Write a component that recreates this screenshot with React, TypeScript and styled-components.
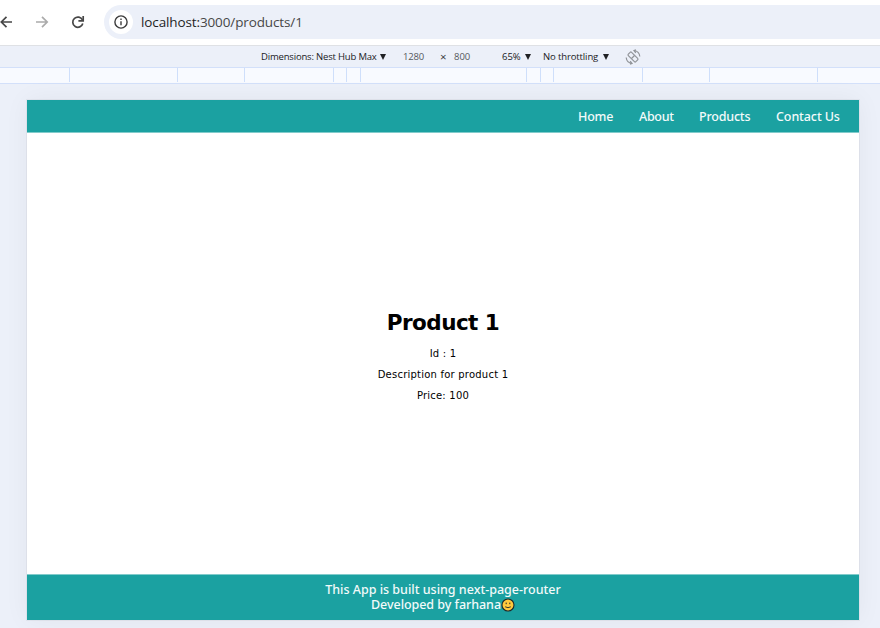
import React from 'react';
import styled, { createGlobalStyle } from 'styled-components';

const GlobalStyle = createGlobalStyle`
  * { box-sizing: border-box; }
  html, body { margin: 0; padding: 0; overflow: hidden; background: #ecf0f9; }
`;

const Window = styled.div`
  display: flex;
  flex-direction: column;
  width: 880px;
  height: 628px;
  overflow: hidden;
  background: #ecf0f9;
`;

const BrowserBar = styled.div`
  display: flex;
  flex: none;
  height: 46px;
  padding-top: 5px;
  background: #fff;
  border-bottom: 1px solid #dfe1e5;
`;

const NavIcons = styled.div`
  display: flex;
  width: 104px;
  height: 34px;
  svg { flex: none; display: block; }
`;

const AddressBar = styled.div`
  display: flex;
  align-items: center;
  flex: 1;
  height: 34px;
  padding-left: 5px;
  background: #ecf0f9;
  border-radius: 17px 0 0 17px;
`;

const SiteInfo = styled.div`
  display: flex;
  width: 24px;
  height: 24px;
  border-radius: 50%;
  background: #fff;
`;

const Url = styled.div`
  margin-left: 8px;
  font: 13.5px/20px 'Open Sans', 'Noto Sans', sans-serif;
  letter-spacing: -0.12px;
  color: #474747;
  white-space: nowrap;
  span { color: #1f1f1f; }
`;

const DeviceBar = styled.div`
  display: flex;
  align-items: center;
  flex: none;
  height: 21px;
  padding-left: 261px;
  font: 9.5px/14px 'Open Sans', 'Noto Sans', sans-serif;
  color: #202124;
  white-space: nowrap;
`;

const Field = styled.div<{ $w: number; $spacing?: number; $muted?: boolean }>`
  display: flex;
  align-items: center;
  flex: none;
  width: ${(p) => p.$w}px;
  letter-spacing: ${(p) => p.$spacing ?? 0}px;
  color: ${(p) => (p.$muted ? '#55585c' : '#202124')};
`;

const Times = styled.span`
  font-size: 11.5px;
  color: #3c4043;
`;

const Caret = styled.i`
  margin-left: auto;
  border: 3.5px solid transparent;
  border-top: 6px solid #202124;
  border-bottom: 0;
`;

const Gap = styled.div<{ $w: number }>`
  flex: none;
  width: ${(p) => p.$w}px;
`;

const Ruler = styled.div`
  display: flex;
  flex: none;
  height: 17px;
  padding-bottom: 1px;
  background: #f8faff;
  border: solid #d3e0fa;
  border-width: 1px 0;
`;

const Segment = styled.div<{ $w: number }>`
  flex: none;
  width: ${(p) => p.$w}px;
  border-right: 1px solid #cfdffb;
`;

const Stage = styled.div`
  flex: 1;
  padding: 16px 21px 8px 27px;
`;

const Page = styled.div`
  display: flex;
  flex-direction: column;
  width: 832px;
  height: 520px;
  background: #fff;
  box-shadow: 0 0 0 1px rgba(0, 0, 0, 0.04), 0 0 24px rgba(0, 0, 0, 0.05);
  font-family: 'DejaVu Sans', sans-serif;
`;

const Header = styled.nav`
  display: flex;
  justify-content: flex-end;
  align-items: center;
  flex: none;
  height: 33px;
  padding: 2px 19px 0 0;
  background: #1ba1a1;
  border-bottom: 1px solid #82cbcb;
`;

const NavLink = styled.a<{ $w: number; $spacing: number }>`
  width: ${(p) => p.$w}px;
  margin-left: 26px;
  font: 500 12.5px/16px 'Noto Sans', sans-serif;
  letter-spacing: ${(p) => p.$spacing}px;
  color: #f2fafa;
  white-space: nowrap;
`;

const Product = styled.main`
  flex: 1;
  padding-top: 175px;
  text-align: center;
  color: #000;
`;

const Title = styled.h1`
  margin: 0 0 6px;
  font: 700 21.5px/29px 'DejaVu Sans', sans-serif;
  letter-spacing: -0.55px;
`;

const Detail = styled.p`
  margin: 0;
  font-size: 10px;
  line-height: 21px;
  letter-spacing: 0.22px;
`;

const Footer = styled.footer`
  flex: none;
  height: 46px;
  padding-top: 7px;
  background: #1ba1a1;
  border-top: 1px solid #82cbcb;
  color: #f2fafa;
  text-align: center;
  font: 500 12.5px/15px 'Noto Sans', sans-serif;
`;

const FooterLine = styled.div<{ $spacing: number }>`
  display: flex;
  justify-content: center;
  align-items: center;
  height: 15px;
  letter-spacing: ${(p) => p.$spacing}px;
`;

const segments = [70, 108, 67, 89, 13, 14, 166, 14, 13, 89, 67, 108];

const Smiley = () => (
  <svg width="14" height="14" viewBox="0 0 14 14">
    <circle cx="7" cy="7" r="6" fill="#ffc83d" stroke="#20282a" strokeWidth="1.1" />
    <path d="M5.2 4.6v1.6M8.8 4.6v1.6" stroke="#20282a" strokeWidth="1" />
    <path d="M4.2 8.8Q7 10.6 9.8 8.8" fill="none" stroke="#20282a" strokeWidth="0.9" />
  </svg>
);

const App = () => (
  <Window>
    <GlobalStyle />
    <BrowserBar>
      <NavIcons>
        <svg width="104" height="34" viewBox="0 5 104 34" fill="none" strokeWidth="1.7">
          <path d="M12 22H1.5M6.5 16.8L1.3 22l5.2 5.2" stroke="#474747" />
          <path d="M36 22h11M42 16.8l5.2 5.2-5.2 5.2" stroke="#ababab" />
          <path d="M82.5 20A5.1 5.1 0 1 0 82.8 23.5" stroke="#474747" />
          <path d="M83.2 16v4.8h-4.8" stroke="#474747" />
        </svg>
      </NavIcons>
      <AddressBar>
        <SiteInfo>
          <svg width="24" height="24" viewBox="0 0 24 24" fill="none">
            <circle cx="12" cy="12" r="6.1" stroke="#3c3c3c" strokeWidth="1.4" />
            <path d="M12 11.2v4M12 8.5v1.4" stroke="#3c3c3c" strokeWidth="1.4" />
          </svg>
        </SiteInfo>
        <Url><span>localhost:</span>3000/products/1</Url>
      </AddressBar>
    </BrowserBar>
    <DeviceBar>
      <Field $w={125} $spacing={-0.18}>Dimensions: Nest Hub Max<Caret /></Field>
      <Gap $w={17} />
      <Field $w={37} $spacing={-0.15} $muted>1280</Field>
      <Field $w={14}><Times>×</Times></Field>
      <Field $w={48} $muted>800</Field>
      <Field $w={29}>65%<Caret /></Field>
      <Gap $w={12} />
      <Field $w={66} $spacing={-0.12}>No throttling<Caret /></Field>
      <Gap $w={16} />
      <svg width="16" height="16" viewBox="0 0 16 16" fill="none" stroke="#919499" strokeWidth="1.2">
        <rect x="5.7" y="2.7" width="4.6" height="10.6" rx="1" transform="rotate(-45 8 8)" />
        <path d="M6.5 9.5L9.5 6.5M1.2 8.5c.3 3.2 2.4 5.5 5.8 6M5.2 12.2L7 14.5l-2 .6M14.8 7.5C14.5 4.3 12.4 2 9 1.5M10.8 3.8L9 1.5l2-.6" />
      </svg>
    </DeviceBar>
    <Ruler>{segments.map((w, i) => <Segment key={i} $w={w} />)}</Ruler>
    <Stage>
      <Page>
        <Header>
          <NavLink $w={35} $spacing={-0.2}>Home</NavLink>
          <NavLink $w={34} $spacing={-0.3}>About</NavLink>
          <NavLink $w={51} $spacing={-0.2}>Products</NavLink>
          <NavLink $w={64} $spacing={-0.1}>Contact Us</NavLink>
        </Header>
        <Product>
          <Title>Product 1</Title>
          <Detail>Id : 1</Detail>
          <Detail>Description for product 1</Detail>
          <Detail>Price: 100</Detail>
        </Product>
        <Footer>
          <FooterLine $spacing={0}>This App is built using next-page-router</FooterLine>
          <FooterLine $spacing={-0.05}>Developed by farhana<Smiley /></FooterLine>
        </Footer>
      </Page>
    </Stage>
  </Window>
);

export default App;
